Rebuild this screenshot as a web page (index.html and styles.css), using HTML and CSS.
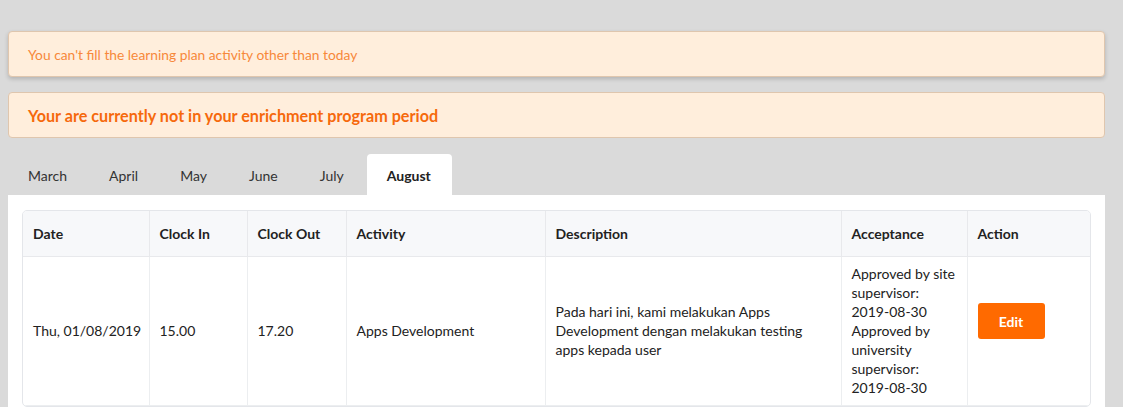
FILE: index.html
```html
<!DOCTYPE html>
<html>
<head>
<meta charset="utf-8">
<link rel="stylesheet" href="styles.css">
</head>
<body>
<div class="page">
  <div class="alert alert-shadow">You can't fill the learning plan activity other than today</div>
  <div class="alert alert-strong">Your are currently not in your enrichment program period</div>
  <div class="tabs">
    <div class="tab">March</div>
    <div class="tab">April</div>
    <div class="tab">May</div>
    <div class="tab">June</div>
    <div class="tab">July</div>
    <div class="tab active">August</div>
  </div>
  <div class="panel">
    <div class="table-wrap">
      <table class="log">
        <colgroup>
          <col class="c-date"><col class="c-in"><col class="c-out"><col class="c-act"><col class="c-desc"><col class="c-acc"><col class="c-action">
        </colgroup>
        <thead>
          <tr>
            <th>Date</th><th>Clock In</th><th>Clock Out</th><th>Activity</th><th>Description</th><th>Acceptance</th><th>Action</th>
          </tr>
        </thead>
        <tbody>
          <tr>
            <td class="nowrap">Thu, 01/08/2019</td>
            <td>15.00</td>
            <td>17.20</td>
            <td>Apps Development</td>
            <td><div class="desc">Pada hari ini, kami melakukan Apps Development dengan melakukan testing apps kepada user</div></td>
            <td>Approved by site supervisor: 2019-08-30<br>Approved by university supervisor: 2019-08-30</td>
            <td><div class="actions"><button class="btn-edit">Edit</button></div></td>
          </tr>
        </tbody>
      </table>
    </div>
  </div>
</div>
</body>
</html>
```

FILE: styles.css
```css
* { box-sizing: border-box; }
html, body { margin: 0; padding: 0; }
body {
  background: #dadada;
  font-family: Lato, "Open Sans", sans-serif;
  color: #333;
  width: 1123px;
  height: 407px;
  overflow: hidden;
}
.page {
  padding: 31px 18px 0 8px;
}
.alert {
  background: #ffeedc;
  border: 1px solid #dfc6ae;
  border-radius: 4px;
  height: 46px;
  display: flex;
  align-items: center;
  padding: 0 19px;
}
.alert-shadow {
  font-size: 13.8px;
  color: #f7883a;
  box-shadow: 0 2px 4px rgba(0,0,0,0.18);
}
.alert-strong {
  margin-top: 15px;
  font-size: 16.2px;
  font-weight: 700;
  color: #f6690c;
}
.tabs {
  display: flex;
  margin-top: 16px;
  height: 41px;
  align-items: stretch;
}
.tab {
  font-size: 14px;
  color: #333;
  display: flex;
  align-items: center;
  padding: 1px 21px 0;
  border-radius: 4px 4px 0 0;
}
.tab:first-child { padding-left: 20px; }
.tab:nth-child(5) { padding-right: 23px; }
.tab.active {
  background: #fff;
  font-weight: 700;
  color: #222;
  padding: 1px 21px 0 20px;
}
.panel {
  background: #fff;
  padding: 15px 14px 0 14px;
  height: 220px;
}
.table-wrap {
  border: 1px solid #e4e6ea;
  border-radius: 5px;
  overflow: hidden;
}
.log {
  width: 100%;
  border-collapse: collapse;
  table-layout: fixed;
  font-size: 14px;
}
.c-date { width: 126px; }
.c-in { width: 98px; }
.c-out { width: 99px; }
.c-act { width: 199px; }
.c-desc { width: 296px; }
.c-acc { width: 126px; }
.c-action { width: auto; }
.log th {
  background: #f7f8fa;
  font-size: 14px;
  font-weight: 700;
  color: #222;
  text-align: left;
  height: 45px;
  padding: 0 10px;
  border-right: 1px solid #e8e9ec;
  border-bottom: 1px solid #e8e9ec;
}
.log td {
  padding: 7px 10px 8px;
  line-height: 19px;
  vertical-align: middle;
  border-right: 1px solid #eceef0;
  border-bottom: 1px solid #eceef0;
  color: #222;
}
.log td.nowrap { white-space: nowrap; }
.log th:last-child, .log td:last-child { border-right: none; }
.desc { max-width: 252px; }
.actions { padding: 0 0 18px 0; }
.btn-edit {
  display: block;
  width: 67px;
  height: 36px;
  border: none;
  border-radius: 3px;
  background: #ff6a00;
  color: #fff;
  font-family: Lato, "Open Sans", sans-serif;
  font-size: 14px;
  font-weight: 700;
}
```
